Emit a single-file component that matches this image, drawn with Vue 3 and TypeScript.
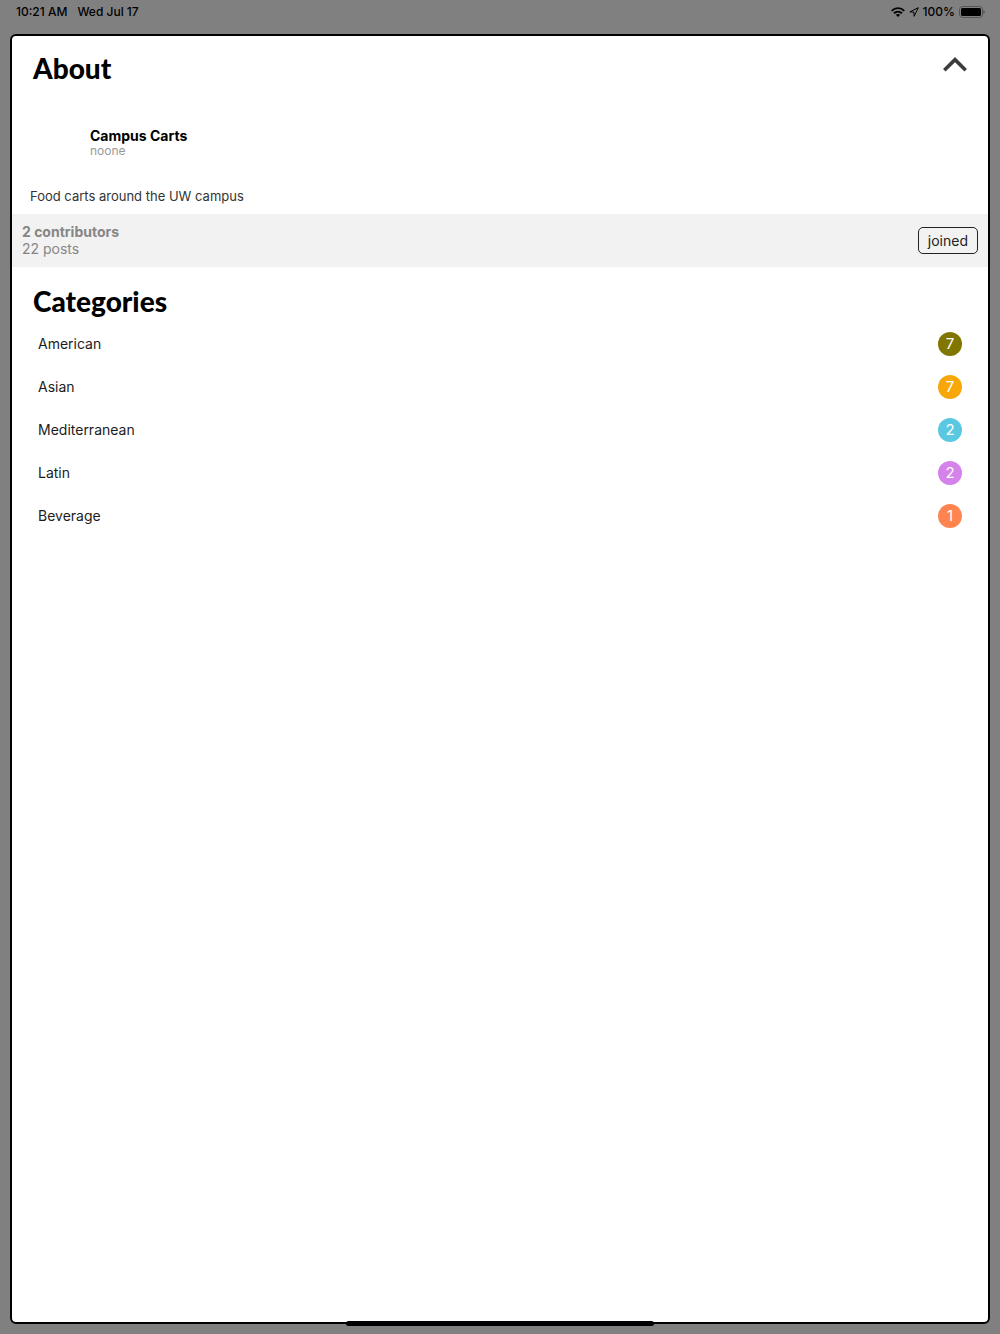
<script setup lang="ts">
import { ref } from 'vue'

interface Category {
  name: string
  count: number
  color: string
}

const open = ref(true)
const joined = ref(true)

const categories: Category[] = [
  { name: 'American', count: 7, color: '#807600' },
  { name: 'Asian', count: 7, color: '#f7a808' },
  { name: 'Mediterranean', count: 2, color: '#5bc8e2' },
  { name: 'Latin', count: 2, color: '#d582ea' },
  { name: 'Beverage', count: 1, color: '#ff844f' },
]
</script>

<template>
  <div class="screen">
    <header class="status">
      <span>10:21 AM</span>
      <span>Wed Jul 17</span>
      <div class="status-right">
        <svg viewBox="0 0 14 10" width="14" height="10" aria-hidden="true">
          <path d="M.7 3.800C4.300.2 9.700.2 13.300 3.800" fill="none" stroke="#000" stroke-width="1.900" />
          <path d="M3 6.300c2.300-2.200 5.700-2.200 8 0" fill="none" stroke="#000" stroke-width="1.900" />
          <path d="M7 10 4.800 7.800c1.200-1.200 3.200-1.200 4.400 0z" />
        </svg>
        <svg viewBox="0 0 10 10" width="10" height="10" aria-hidden="true">
          <path d="M9.300.7.900 4.900l4 .2.200 4.200z" fill="none" stroke="#000" stroke-linejoin="round" />
        </svg>
        <span>100%</span>
        <svg viewBox="0 0 26 12" width="26" height="12" aria-hidden="true">
          <rect x=".5" y=".5" width="23" height="11" rx="3" fill="none" stroke="#555" />
          <rect x="2" y="2" width="20" height="8" rx="1.500" />
          <path d="M24.500 4c1.500.6 1.500 3.400 0 4z" fill="#444" />
        </svg>
      </div>
    </header>

    <main class="card">
      <div class="title-row">
        <h1>About</h1>
        <button class="collapse" type="button" aria-label="Toggle details" :aria-expanded="open" @click="open = !open">
          <svg viewBox="0 0 24 15" width="24" height="15" aria-hidden="true">
            <path d="M1.300 13.200 12 2.600l10.700 10.600" fill="none" stroke="#3c3c3c" stroke-width="3.600" />
          </svg>
        </button>
      </div>

      <section class="community">
        <h2>Campus Carts</h2>
        <p>noone</p>
      </section>
      <p class="description">Food carts around the UW campus</p>

      <section class="stats">
        <div>
          <p class="contributors">2 contributors</p>
          <p>22 posts</p>
        </div>
        <button class="join" type="button" @click="joined = !joined">{{ joined ? 'joined' : 'join' }}</button>
      </section>

      <section class="categories">
        <h1>Categories</h1>
        <ul>
          <li v-for="category in categories" :key="category.name">
            <span>{{ category.name }}</span>
            <span class="count" :style="{ backgroundColor: category.color }">{{ category.count }}</span>
          </li>
        </ul>
      </section>
    </main>
    <div class="home-indicator"></div>
  </div>
</template>

<style>
body {
  margin: 0;
  background: #808080;
}
</style>

<style scoped>
.screen {
  position: relative;
  box-sizing: border-box;
  display: flex;
  flex-direction: column;
  min-height: 100vh;
  padding: 0 10px 10px;
  background: #808080;
  color: #000;
  font-family: Inter, "Liberation Sans", sans-serif;
  font-size: 14px;
  line-height: 16px;
}

h1,
h2,
p,
ul {
  margin: 0;
  padding: 0;
}

.status {
  display: flex;
  align-items: center;
  gap: 10px;
  height: 24px;
  margin-bottom: 10px;
  padding: 0 5px 0 6px;
  font-size: 12px;
  font-weight: 500;
}

.status-right {
  display: flex;
  align-items: center;
  gap: 4px;
  margin-left: auto;
}

.card {
  flex: 1;
  border: 2px solid #000;
  border-radius: 6px;
  background: #fff;
}

h1 {
  font-family: Lato, sans-serif;
  font-size: 28px;
  font-weight: 900;
  line-height: 32px;
}

.title-row {
  display: flex;
  align-items: center;
  justify-content: space-between;
  padding: 16px 21px 0;
}

.collapse {
  display: flex;
  padding: 0 0 8px;
  border: 0;
  background: none;
  cursor: pointer;
}

.community {
  padding: 43px 78px 0;
}

.community h2 {
  font-size: 14px;
  font-weight: 700;
  line-height: 17px;
}

.community p {
  color: #999;
  font-size: 12px;
  line-height: 14px;
}

.description {
  padding: 30px 18px 10px;
  color: #333;
  font-size: 13px;
}

.stats {
  display: flex;
  align-items: center;
  justify-content: space-between;
  padding: 9px 10px 10px;
  background: #f2f2f2;
  color: #868686;
  line-height: 17px;
}

.contributors {
  font-weight: 700;
}

.join {
  padding: 4px 9px;
  border: 1px solid #222;
  border-radius: 5px;
  background: transparent;
  color: #222;
  font: inherit;
  cursor: pointer;
}

.categories {
  padding: 18px 26px 0 21px;
}

ul {
  padding: 5px 0 0 5px;
  list-style: none;
}

li {
  display: flex;
  align-items: center;
  justify-content: space-between;
  height: 43px;
  color: #1c1c1c;
}

.count {
  width: 24px;
  border-radius: 50%;
  color: #fff;
  font-size: 15px;
  line-height: 24px;
  text-align: center;
}

.home-indicator {
  position: absolute;
  bottom: 8px;
  left: 50%;
  width: 308px;
  height: 5px;
  margin-left: -154px;
  border-radius: 3px;
  background: #000;
}
</style>
